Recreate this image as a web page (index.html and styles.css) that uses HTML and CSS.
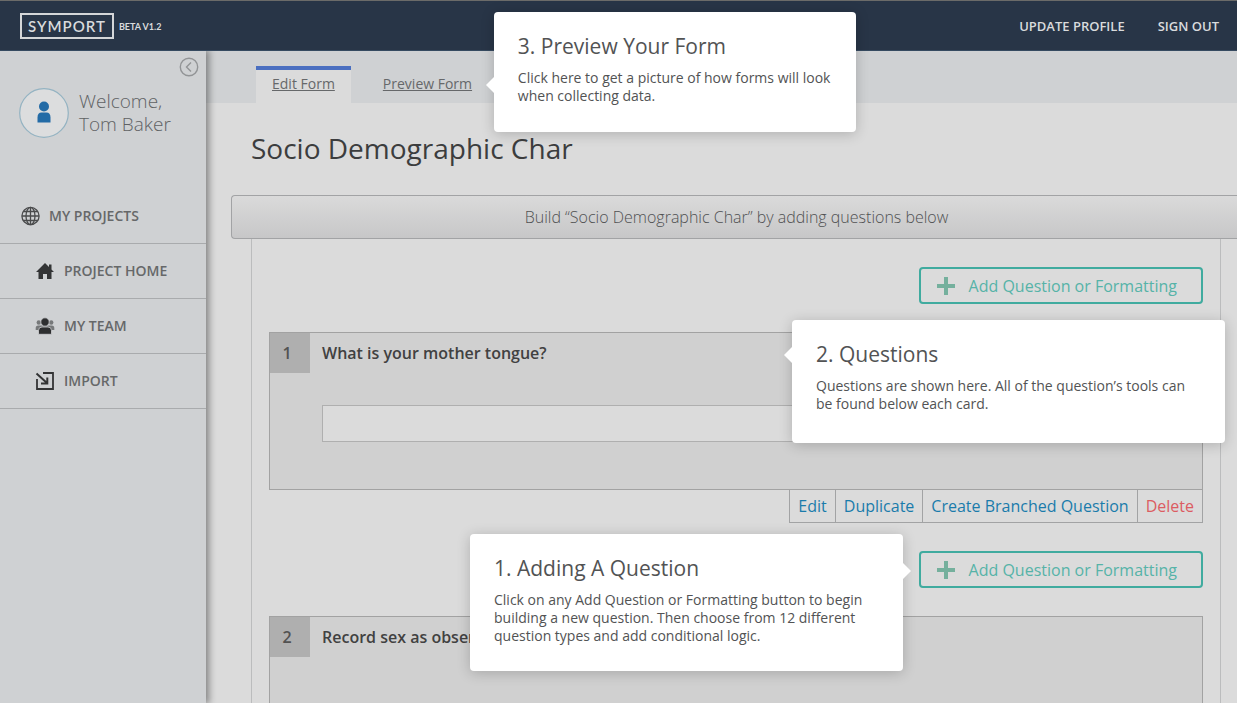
FILE: index.html
```html
<!DOCTYPE html>
<html lang="en">
<head>
<meta charset="utf-8">
<title>Symport - Edit Form</title>
<link rel="stylesheet" href="styles.css">
</head>
<body>
<header class="topbar">
  <a class="brand" href="#">SYMPORT</a>
  <span class="version">BETA V1.2</span>
  <nav class="account">
    <a href="#">UPDATE PROFILE</a>
    <a href="#">SIGN OUT</a>
  </nav>
</header>
<div class="shell">
  <aside class="sidebar">
    <button class="collapse" type="button" aria-label="Collapse sidebar">
      <svg width="20" height="20" viewBox="0 0 20 20" fill="none" stroke="#929496" stroke-width="1.4"><circle cx="10" cy="10" r="8.7"/><path d="M12 5.500 7.500 10l4.500 4.500"/></svg>
    </button>
    <div class="user">
      <svg class="avatar" width="50" height="50" viewBox="0 0 50 50"><circle cx="25" cy="25" r="24.300" fill="#dcddde" stroke="#94b3c2" stroke-width="1.200"/><circle cx="25" cy="18.500" r="5" fill="#236ba6"/><path d="M18.500 34.500v-5c0-3.500 1.500-5 4-5h5c2.500 0 4 1.500 4 5v5z" fill="#236ba6"/></svg>
      <p class="welcome">Welcome,<br>Tom Baker</p>
    </div>
    <nav class="menu">
      <a class="item" href="#">
        <svg width="20" height="20" viewBox="0 0 20 20" fill="none" stroke="#4a4b4c" stroke-width="1.300"><circle cx="9.500" cy="10" r="8.600"/><ellipse cx="9.500" cy="10" rx="4.500" ry="8.600"/><path d="M9.500 1.500v17M1 10h17M2.500 5.500h14M2.500 14.500h14"/></svg>
        MY PROJECTS
      </a>
      <a class="item sub" href="#">
        <svg width="20" height="20" viewBox="0 0 20 20" fill="#333435"><path d="M10 2 1 11h2.500v7H8v-5h4v5h4.500v-7H19l-2.500-2.500V3.500H14V6z"/></svg>
        PROJECT HOME
      </a>
      <a class="item sub" href="#">
        <svg width="20" height="20" viewBox="0 0 20 20"><g fill="#77797a"><circle cx="3.800" cy="6.500" r="2.200"/><circle cx="16.200" cy="6.500" r="2.200"/><path d="M.7 14V12q0-2.500 2.500-2.500h13.600Q19.300 9.500 19.300 12v2z"/></g><g fill="#2e2f30" stroke="#cfd1d3" stroke-width=".8"><path d="M3.500 18.300V14.500q0-3.500 3.500-3.500h6q3.500 0 3.500 3.500v3.800z"/><circle cx="10" cy="6" r="4.200"/></g></svg>
        MY TEAM
      </a>
      <a class="item sub" href="#">
        <svg width="20" height="20" viewBox="0 0 20 20" fill="none" stroke="#333435" stroke-width="1.800"><path d="M8 2h10v16H2V8"/><path d="M1.500 2.500 12 12M12.300 6.500v6H6" stroke-width="2"/></svg>
        IMPORT
      </a>
    </nav>
  </aside>
  <main class="main">
    <div class="tabs">
      <a class="tab active" href="#">Edit Form</a>
      <div class="tab-wrap">
        <a class="tab" href="#">Preview Form</a>
        <section class="tip tip-preview">
          <h2>3. Preview Your Form</h2>
          <p>Click here to get a picture of how forms will look when collecting data.</p>
        </section>
      </div>
    </div>
    <h1 class="title">Socio Demographic Char</h1>
    <div class="builder">
      <div class="banner">Build “Socio Demographic Char” by adding questions below</div>
      <div class="panel">
        <div class="add-row">
          <button class="add" type="button">
            <svg width="18" height="18" viewBox="0 0 18 18" fill="#75b09d"><path d="M7 0h4v7h7v4h-7v7H7v-7H0V7h7z"/></svg>
            Add Question or Formatting
          </button>
        </div>
        <article class="card">
          <span class="number">1</span>
          <div class="body">
            <label class="question" for="answer-1">What is your mother tongue?</label>
            <input class="answer" id="answer-1" type="text">
          </div>
          <section class="tip tip-questions">
            <h2>2. Questions</h2>
            <p>Questions are shown here. All of the question’s tools can be found below each card.</p>
          </section>
        </article>
        <div class="actions">
          <button type="button">Edit</button>
          <button type="button">Duplicate</button>
          <button type="button">Create Branched Question</button>
          <button class="danger" type="button">Delete</button>
        </div>
        <div class="add-row">
          <button class="add" type="button">
            <svg width="18" height="18" viewBox="0 0 18 18" fill="#75b09d"><path d="M7 0h4v7h7v4h-7v7H7v-7H0V7h7z"/></svg>
            Add Question or Formatting
          </button>
          <section class="tip tip-adding">
            <h2>1. Adding A Question</h2>
            <p>Click on any Add Question or Formatting button to begin building a new question. Then choose from 12 different question types and add conditional logic.</p>
          </section>
        </div>
        <article class="card">
          <span class="number">2</span>
          <div class="body">
            <p class="question">Record sex as observed</p>
          </div>
        </article>
      </div>
    </div>
  </main>
</div>
</body>
</html>
```
FILE: styles.css
```css
* { box-sizing: border-box; }
body {
  margin: 0;
  height: 100vh;
  overflow: hidden;
  display: flex;
  flex-direction: column;
  background: #dbdbdb;
  color: #3c3d3e;
  font-family: "Open Sans", "Noto Sans", sans-serif;
}
h1, h2, p { margin: 0; }
a { color: inherit; text-decoration: none; }
button { font: inherit; color: inherit; background: none; border: 0; padding: 0; cursor: pointer; }
svg { display: block; flex: none; }

.topbar {
  flex: none;
  display: flex;
  align-items: center;
  height: 51px;
  padding: 0 18px 0 20px;
  background: #283547;
  border-top: 1px solid #6b6b69;
  border-bottom: 1px solid #364a60;
  color: #d9dbdd;
}
.brand {
  padding: 0 6px;
  border: 2px solid #d4d6d8;
  font: 600 15px/22px Lato, sans-serif;
  letter-spacing: 1px;
}
.version { margin-left: 5px; padding-top: 2px; font: 700 9px/16px Lato, sans-serif; }
.account { margin-left: auto; display: flex; gap: 33px; font-size: 13px; font-weight: 600; }

.shell { flex: 1; display: flex; min-height: 0; }
.sidebar {
  position: relative;
  z-index: 1;
  flex: none;
  width: 206px;
  background: #cfd1d3;
  box-shadow: 2px 0 7px 1px rgba(0, 0, 0, .4);
  clip-path: inset(0 -16px 0 0);
}
.collapse { display: block; margin: 6px 7px 0 auto; }
.user { display: flex; gap: 10px; padding: 11px 0 0 19px; }
.welcome { font-size: 19px; font-weight: 300; line-height: 23px; color: #606264; padding-top: 2px; }
.menu { margin-top: 51px; }
.item {
  display: flex;
  align-items: center;
  gap: 8px;
  height: 55px;
  padding: 0 0 1px 21px;
  border-bottom: 1px solid #a9abad;
  color: #666869;
  font-size: 14px;
  font-weight: 600;
}
.sub { padding-left: 35px; gap: 9px; }

.main { flex: 1; min-width: 0; }
.tabs { display: flex; align-items: flex-end; gap: 16px; height: 52px; padding-left: 50px; background: #cfd1d3; }
.tab {
  display: block;
  padding: 4px 16px 0;
  height: 37px;
  border-top: 4px solid transparent;
  color: #66686a;
  font-size: 14px;
  line-height: 20px;
  text-decoration: underline;
}
.active { background: #dbdbdb; border-top-color: #4a6fc0; }
.tab-wrap { position: relative; }
.title { padding: 26px 0 0 45px; font-size: 28px; font-weight: 400; line-height: 38px; }

.builder { margin: 28px 0 0 25px; }
.banner {
  border: 1px solid #a2a3a5;
  border-right: 0;
  border-radius: 4px 0 0 4px;
  background: linear-gradient(#dadada, #c7c7c8);
  color: #505152;
  font-size: 16px;
  font-weight: 300;
  line-height: 42px;
  padding-left: 4px;
  text-align: center;
}
.panel {
  margin: 0 16px 0 20px;
  padding: 0 17px;
  border: solid #bbbcbd;
  border-width: 0 1px;
}
.add-row { position: relative; display: flex; justify-content: flex-end; padding: 28px 0; }
.add {
  display: flex;
  align-items: center;
  gap: 14px;
  height: 37px;
  padding: 0 24px 0 16px;
  border: 2px solid #40ab9f;
  border-radius: 4px;
  color: #56b3a8;
  font-size: 16px;
}
.card {
  position: relative;
  display: flex;
  gap: 12px;
  height: 158px;
  border: 1px solid #a2a2a2;
  background: #d0d0d0;
}
.number {
  width: 40px;
  height: 40px;
  padding-right: 6px;
  background: #afafaf;
  font-size: 16px;
  font-weight: 600;
  line-height: 40px;
  text-align: center;
  color: #525252;
}
.body { flex: 1; padding-right: 40px; }
.question { display: block; font-size: 16px; font-weight: 600; line-height: 40px; color: #414141; }
.answer {
  display: block;
  width: 100%;
  height: 37px;
  margin-top: 32px;
  border: 1px solid #afafaf;
  background: #dbdbdb;
}
.actions { display: flex; justify-content: flex-end; }
.actions button {
  height: 33px;
  padding: 0 8px;
  border: 1px solid #a2a3a4;
  border-top: 0;
  color: #1a7bab;
  font-size: 16px;
}
.actions button + button { margin-left: -1px; }
.actions .danger { color: #dc5c62; }

.tip {
  position: absolute;
  z-index: 5;
  padding: 19px 20px 26px 24px;
  border-radius: 4px;
  background: #fff;
  box-shadow: 0 2px 14px rgba(0, 0, 0, .2);
  color: #525354;
}
.tip h2 { font-size: 21px; font-weight: 400; line-height: 30px; }
.tip p { margin-top: 8px; font-size: 14px; font-weight: 400; line-height: 18px; }
.tip::before {
  content: "";
  position: absolute;
  top: 27px;
  left: -8px;
  border: solid transparent;
  border-width: 8px 8px 8px 0;
  border-right-color: #fff;
}
.tip-preview { top: -54px; left: 127px; width: 362px; height: 120px; }
.tip-preview::before { top: 65px; }
.tip-questions { top: -13px; right: -23px; width: 433px; height: 123px; }
.tip-adding { top: 11px; right: 300px; width: 433px; height: 137px; }
.tip-adding::before {
  top: 29px;
  left: 100%;
  border-width: 8px 0 8px 8px;
  border-left-color: #fff;
}
```
